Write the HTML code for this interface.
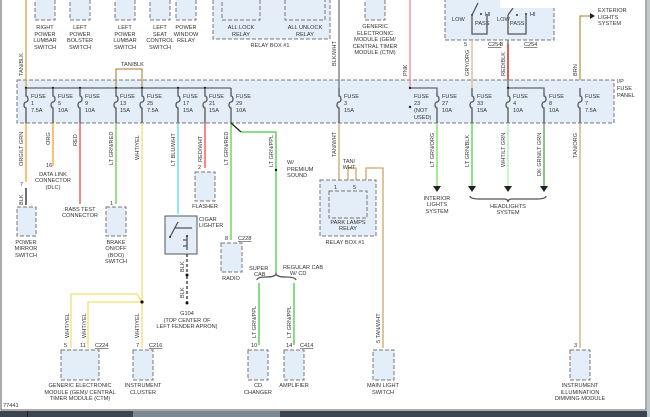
<!DOCTYPE html>
<html><head><meta charset="utf-8"><style>
html,body{margin:0;padding:0;background:#fff;}
svg{display:block;font-family:"Liberation Sans",sans-serif;}
text{font-size:5.6px;fill:#333;}
.b{fill:#e4eef8;stroke:#777;stroke-width:1;stroke-dasharray:4,2;}
.w{fill:none;stroke-width:1.3;}
</style></head><body>
<svg width="650" height="417" viewBox="0 0 650 417" xmlns="http://www.w3.org/2000/svg">
<rect x="0" y="0" width="650" height="417" fill="#fff"/>
<!-- top components -->
<rect class="b" x="35" y="-4" width="20" height="24"/>
<rect class="b" x="70" y="-4" width="20" height="24"/>
<rect class="b" x="115" y="-4" width="20" height="24"/>
<rect class="b" x="150" y="-4" width="20" height="24"/>
<rect class="b" x="176" y="-4" width="20" height="24"/>
<g text-anchor="middle">
<text x="45" y="29">RIGHT</text><text x="45" y="36">POWER</text><text x="45" y="42">LUMBAR</text><text x="45" y="49">SWITCH</text>
<text x="80" y="29">LEFT</text><text x="80" y="36">POWER</text><text x="80" y="42">BOLSTER</text><text x="80" y="49">SWITCH</text>
<text x="125" y="29">LEFT</text><text x="125" y="36">POWER</text><text x="125" y="42">LUMBAR</text><text x="125" y="49">SWITCH</text>
<text x="160" y="29">LEFT</text><text x="160" y="36">SEAT</text><text x="160" y="42">CONTROL</text><text x="160" y="49">SWITCH</text>
<text x="186" y="29">POWER</text><text x="186" y="36">WINDOW</text><text x="186" y="42">RELAY</text>
</g>
<rect class="b" x="213" y="-4" width="117" height="43"/>
<rect class="b" x="222" y="-4" width="38" height="24"/>
<rect class="b" x="285" y="-4" width="40" height="24"/>
<g text-anchor="middle">
<text x="241" y="29">ALL LOCK</text><text x="241" y="36">RELAY</text>
<text x="305" y="29">ALL UNLOCK</text><text x="305" y="36">RELAY</text>
<text x="270" y="47">RELAY BOX #1</text>
<text x="375" y="28">GENERIC</text><text x="375" y="35">ELECTRONIC</text><text x="375" y="41">MODULE (GEM/</text><text x="375" y="48">CENTRAL TIMER</text><text x="375" y="54">MODULE (CTM)</text>
</g>
<rect class="b" x="365" y="-4" width="20" height="24"/>
<!-- headlight switch -->
<rect class="b" x="445" y="-4" width="109" height="44"/>
<text x="452" y="21">LOW</text><text x="475" y="25">PASS</text><text x="485" y="16">HI</text>
<text x="497" y="21">LOW</text><text x="510" y="25">PASS</text><text x="530" y="16">HI</text>
<g fill="#333"><circle cx="481" cy="14" r="1"/><circle cx="517" cy="15" r="1"/><circle cx="526" cy="14" r="1"/><circle cx="472" cy="15" r="1"/></g>
<path d="M472 15 V34 H487 V14 M508 15 V34 H526 V14 M472 15 L478 3 M508 15 L513 8" class="w" stroke="#555" stroke-width="0.9"/>
<rect x="500" y="0" width="145" height="8" fill="#fff"/>
<text x="464" y="46">5</text><text x="488" y="46" style="text-decoration:underline">C254</text>
<text x="500" y="46">3</text><text x="524" y="46" style="text-decoration:underline">C254</text>
<!-- exterior -->
<path d="M580 88 V16 H590" class="w" stroke="#b8954e"/>
<path d="M590 13 L595 16 L590 19Z" fill="#222"/>
<text x="598" y="12">EXTERIOR</text><text x="598" y="19">LIGHTS</text><text x="598" y="25">SYSTEM</text>
<!-- fuse panel -->
<rect class="b" x="17" y="80" width="597" height="43"/>
<text x="617" y="83">I/P</text><text x="617" y="90">FUSE</text><text x="617" y="97">PANEL</text>
<!-- upper wires -->
<path d="M26 0 V88" class="w" stroke="#d9a04a"/>
<path d="M116 88 V69 H142 V88" class="w" stroke="#b8954e"/>
<path d="M26 88 H231" class="w" stroke="#666"/>
<path d="M339 0 V88" class="w" stroke="#777"/>
<path d="M410 0 V88" class="w" stroke="#f08a9a"/>
<path d="M410 88 H437 V92" class="w" stroke="#666"/>
<path d="M472 40 V88" class="w" stroke="#e0b888"/>
<path d="M508 40 V88 H544 V92" class="w" stroke="#666"/>
<path d="M508 44 V80" class="w" stroke="#e02020"/>
<text transform="translate(23,76) rotate(-90)">TAN/BLK</text>
<text x="121" y="66">TAN/BLK</text>
<text transform="translate(336,66) rotate(-90)">BLK/WHT</text>
<text transform="translate(407,76) rotate(-90)">PNK</text>
<text transform="translate(469,76) rotate(-90)">GRY/ORG</text>
<text transform="translate(505,76) rotate(-90)">RED/BLK</text>
<text transform="translate(577,76) rotate(-90)">BRN</text>
<!-- fuses -->
<g fill="#222"><circle cx="26" cy="88" r="1.2"/><circle cx="53" cy="88" r="1.2"/><circle cx="80" cy="88" r="1.2"/><circle cx="116" cy="88" r="1.2"/><circle cx="142" cy="88" r="1.2"/><circle cx="178" cy="88" r="1.2"/><circle cx="205" cy="88" r="1.2"/><circle cx="410" cy="88" r="1.2"/><circle cx="508" cy="88" r="1.2"/><circle cx="410" cy="107" r="1.2"/></g>
<g class="w" stroke="#555" stroke-width="0.9">
<path d="M26 88v8a2 3 0 0 1 0 6a2 3 0 0 0 0 6v15"/>
<path d="M53 88v8a2 3 0 0 1 0 6a2 3 0 0 0 0 6v15"/>
<path d="M80 88v8a2 3 0 0 1 0 6a2 3 0 0 0 0 6v15"/>
<path d="M116 88v8a2 3 0 0 1 0 6a2 3 0 0 0 0 6v15"/>
<path d="M142 88v8a2 3 0 0 1 0 6a2 3 0 0 0 0 6v15"/>
<path d="M178 88v8a2 3 0 0 1 0 6a2 3 0 0 0 0 6v15"/>
<path d="M205 88v8a2 3 0 0 1 0 6a2 3 0 0 0 0 6v15"/>
<path d="M231 88v8a2 3 0 0 1 0 6a2 3 0 0 0 0 6v15"/>
<path d="M339 88v8a2 3 0 0 1 0 6a2 3 0 0 0 0 6v15"/>
<path d="M437 92v4a2 3 0 0 1 0 6a2 3 0 0 0 0 6v15"/>
<path d="M472 88v8a2 3 0 0 1 0 6a2 3 0 0 0 0 6v15"/>
<path d="M508 88v8a2 3 0 0 1 0 6a2 3 0 0 0 0 6v15"/>
<path d="M544 92v4a2 3 0 0 1 0 6a2 3 0 0 0 0 6v15"/>
<path d="M580 88v8a2 3 0 0 1 0 6a2 3 0 0 0 0 6v15"/>
</g>
<g>
<text x="31" y="98">FUSE</text><text x="31" y="105">1</text><text x="31" y="112">7.5A</text>
<text x="58" y="98">FUSE</text><text x="58" y="105">5</text><text x="58" y="112">10A</text>
<text x="85" y="98">FUSE</text><text x="85" y="105">9</text><text x="85" y="112">10A</text>
<text x="120" y="98">FUSE</text><text x="120" y="105">13</text><text x="120" y="112">15A</text>
<text x="147" y="98">FUSE</text><text x="147" y="105">25</text><text x="147" y="112">7.5A</text>
<text x="183" y="98">FUSE</text><text x="183" y="105">17</text><text x="183" y="112">15A</text>
<text x="209" y="98">FUSE</text><text x="209" y="105">21</text><text x="209" y="112">15A</text>
<text x="236" y="98">FUSE</text><text x="236" y="105">29</text><text x="236" y="112">10A</text>
<text x="344" y="98">FUSE</text><text x="344" y="105">3</text><text x="344" y="112">15A</text>
<text x="414" y="98">FUSE</text><text x="414" y="105">23</text><text x="414" y="112">(NOT</text><text x="414" y="119">USED)</text>
<text x="442" y="98">FUSE</text><text x="442" y="105">27</text><text x="442" y="112">10A</text>
<text x="477" y="98">FUSE</text><text x="477" y="105">33</text><text x="477" y="112">15A</text>
<text x="513" y="98">FUSE</text><text x="513" y="105">4</text><text x="513" y="112">10A</text>
<text x="549" y="98">FUSE</text><text x="549" y="105">8</text><text x="549" y="112">10A</text>
<text x="585" y="98">FUSE</text><text x="585" y="105">7</text><text x="585" y="112">7.5A</text>
</g>
<!-- lower wires left -->
<path d="M26 123 V182" class="w" stroke="#f0a030"/>
<path d="M26 188 V205" class="w" stroke="#222"/>
<path d="M53 123 V166" class="w" stroke="#f0a030"/>
<path d="M80 123 V204" class="w" stroke="#f04848"/>
<path d="M116 123 V204" class="w" stroke="#66cc44"/>
<path d="M142 123 V348 M142 302 L137 294 H71 V348 M142 302 H88 V348" class="w" stroke="#f0e070"/>
<circle cx="142" cy="302" r="1.6" fill="#111"/>
<path d="M178 123 V214" class="w" stroke="#55dde8"/>
<path d="M205 123 V168" class="w" stroke="#f04848"/>
<path d="M231 123 V240" class="w" stroke="#66cc44"/>
<path d="M231 123 L241 132" class="w" stroke="#222"/>
<path d="M241 132 H276 V275 M259 345 V283 M294 345 V283" class="w" stroke="#44cc44"/>
<circle cx="276" cy="170" r="1.2" fill="#111"/>
<text x="287" y="164">W/</text><text x="287" y="171">PREMIUM</text><text x="287" y="177">SOUND</text>
<path d="M257 280 q0 -3 9 -3 q9 0 10 -3 q1 3 10 3 q9 0 10 3" class="w" stroke="#555" stroke-width="0.7"/>
<text x="249" y="270">SUPER</text><text x="254" y="276">CAB</text>
<text x="283" y="269">REGULAR CAB</text><text x="290" y="275">W/ CD</text>
<g fill="#333">
<text transform="translate(23,166) rotate(-90)">ORG/LT GRN</text>
<text transform="translate(50,145) rotate(-90)">ORG</text>
<text transform="translate(77,146) rotate(-90)">RED</text>
<text transform="translate(113,165) rotate(-90)">LT GRN/RED</text>
<text transform="translate(139,160) rotate(-90)">WHT/YEL</text>
<text transform="translate(175,166) rotate(-90)">LT BLU/WHT</text>
<text transform="translate(202,162) rotate(-90)">RED/WHT</text>
<text transform="translate(228,165) rotate(-90)">LT GRN/RED</text>
<text transform="translate(273,167) rotate(-90)">LT GRN/PPL</text>
<text transform="translate(23,205) rotate(-90)">BLK</text>
<text transform="translate(69,338) rotate(-90)">WHT/YEL</text>
<text transform="translate(86,338) rotate(-90)">WHT/YEL</text>
<text transform="translate(139,338) rotate(-90)">WHT/YEL</text>
<text transform="translate(184,272) rotate(-90)">BLK</text>
<text transform="translate(184,298) rotate(-90)">BLK</text>
<text transform="translate(256,338) rotate(-90)">LT GRN/PPL</text>
<text transform="translate(291,338) rotate(-90)">LT GRN/PPL</text>
</g>
<text x="20" y="186">7</text>
<text x="46" y="167">16</text>
<g text-anchor="middle"><text x="53" y="176">DATA LINK</text><text x="53" y="182">CONNECTOR</text><text x="53" y="189">(DLC)</text>
<text x="80" y="211">RABS TEST</text><text x="80" y="217">CONNECTOR</text></g>
<rect class="b" x="17" y="207" width="19" height="29"/>
<g text-anchor="middle"><text x="26" y="244">POWER</text><text x="26" y="250">MIRROR</text><text x="26" y="257">SWITCH</text></g>
<text x="110" y="205">1</text>
<rect class="b" x="106" y="207" width="20" height="29"/>
<g text-anchor="middle"><text x="116" y="244">BRAKE</text><text x="116" y="250">ON/OFF</text><text x="116" y="257">(BOO)</text><text x="116" y="263">SWITCH</text></g>
<text x="198" y="169">2</text>
<rect class="b" x="195" y="172" width="20" height="29"/>
<text x="205" y="208" text-anchor="middle">FLASHER</text>
<!-- cigar -->
<rect x="165" y="216" width="32" height="38" fill="#e4eef8" stroke="#555" stroke-width="1"/>
<path d="M178 222 L170 237 M175 228 H192 M187 236 V250 M183 240 h4 m-4 6 h4" class="w" stroke="#555" stroke-width="0.7"/>
<circle cx="170" cy="237" r="1" fill="#222"/><circle cx="187" cy="236" r="1" fill="#222"/>
<text x="199" y="221">CIGAR</text><text x="199" y="227">LIGHTER</text>
<path d="M187 254 V272 M187 276 V303" class="w" stroke="#333" stroke-dasharray="3,2"/>
<circle cx="187" cy="275" r="1.5" fill="#111"/><circle cx="187" cy="303" r="1.5" fill="#111"/>
<g text-anchor="middle"><text x="187" y="315">G104</text><text x="187" y="322">(TOP CENTER OF</text><text x="187" y="328">LEFT FENDER APRON)</text></g>
<text x="225" y="240">8</text><text x="238" y="240" style="text-decoration:underline">C228</text>
<rect class="b" x="221" y="243" width="21" height="29"/>
<text x="231" y="280" text-anchor="middle">RADIO</text>
<!-- bottom left boxes -->
<text x="64" y="347">5</text><text x="80" y="347">11</text><text x="95" y="347" style="text-decoration:underline">C224</text>
<rect class="b" x="61" y="350" width="38" height="30"/>
<g text-anchor="middle"><text x="80" y="387">GENERIC ELECTRONIC</text><text x="80" y="394">MODULE (GEM)/ CENTRAL</text><text x="80" y="400">TIMER MODULE (CTM)</text></g>
<text x="136" y="347">7</text><text x="149" y="347" style="text-decoration:underline">C216</text>
<rect class="b" x="133" y="350" width="20" height="30"/>
<g text-anchor="middle"><text x="143" y="387">INSTRUMENT</text><text x="143" y="394">CLUSTER</text></g>
<text x="251" y="347">10</text>
<rect class="b" x="248" y="350" width="20" height="30"/>
<g text-anchor="middle"><text x="258" y="387">CD</text><text x="258" y="394">CHANGER</text></g>
<text x="286" y="347">14</text><text x="300" y="347" style="text-decoration:underline">C414</text>
<rect class="b" x="284" y="350" width="20" height="30"/>
<text x="294" y="387" text-anchor="middle">AMPLIFIER</text>
<!-- right lower -->
<path d="M339 123 V188 M348 188 V168 H356 V188 M366 194 V168 H383 V348" class="w" stroke="#c8a868"/>
<rect class="b" x="320" y="180" width="56" height="56"/>
<rect class="b" x="329" y="191" width="38" height="27"/>
<text x="334" y="189">1</text><text x="353" y="189">5</text>
<g text-anchor="middle"><text x="349" y="163">TAN/</text><text x="349" y="169">WHT</text>
<text x="348" y="224">PARK LAMPS</text><text x="348" y="230">RELAY</text><text x="345" y="244">RELAY BOX #1</text></g>
<text transform="translate(336,157) rotate(-90)">TAN/WHT</text>
<text transform="translate(380,343) rotate(-90)">5  TAN/WHT</text>
<rect class="b" x="373" y="350" width="21" height="30"/>
<g text-anchor="middle"><text x="383" y="387">MAIN LIGHT</text><text x="383" y="394">SWITCH</text></g>
<path d="M437 123 V186" class="w" stroke="#77dd55"/>
<path d="M472 123 V186" class="w" stroke="#55cc55"/>
<path d="M508 123 V186" class="w" stroke="#aaeeaa"/>
<path d="M544 123 V186" class="w" stroke="#44aa44"/>
<path d="M580 123 V348" class="w" stroke="#d0aa70"/>
<g fill="#222"><path d="M433 186h8l-4 6z"/><path d="M468 186h8l-4 6z"/><path d="M504 186h8l-4 6z"/><path d="M540 186h8l-4 6z"/></g>
<text transform="translate(434,167) rotate(-90)">LT GRN/ORG</text>
<text transform="translate(469,167) rotate(-90)">LT GRN/BLK</text>
<text transform="translate(505,167) rotate(-90)">WHT/LT GRN</text>
<text transform="translate(541,176) rotate(-90)">DK GRN/LT GRN</text>
<text transform="translate(577,158) rotate(-90)">TAN/ORG</text>
<g text-anchor="middle"><text x="437" y="200">INTERIOR</text><text x="437" y="206">LIGHTS</text><text x="437" y="213">SYSTEM</text>
<text x="508" y="208">HEADLIGHTS</text><text x="508" y="214">SYSTEM</text></g>
<path d="M470 196 q0 3 10 3 h24 q4 0 4 3 q0 -3 4 -3 h24 q10 0 10 -3" class="w" stroke="#555" stroke-width="0.7"/>
<text x="574" y="347">3</text>
<rect class="b" x="570" y="350" width="20" height="30"/>
<g text-anchor="middle"><text x="580" y="387">INSTRUMENT</text><text x="580" y="394">ILLUMINATION</text><text x="580" y="400">DIMMING MODULE</text></g>
<text x="3" y="407">77441</text>
<!-- frame -->
<path d="M1 0 V410 H646 V0" fill="none" stroke="#555" stroke-width="1"/>
<rect x="0" y="411" width="650" height="6" fill="#3c4452"/>
<rect x="27" y="411" width="1" height="6" fill="#222"/>
<rect x="133" y="411" width="147" height="6" fill="#7a8894"/>
<rect x="647" y="0" width="3" height="417" fill="#bcc"/>
</svg>
</body></html>
